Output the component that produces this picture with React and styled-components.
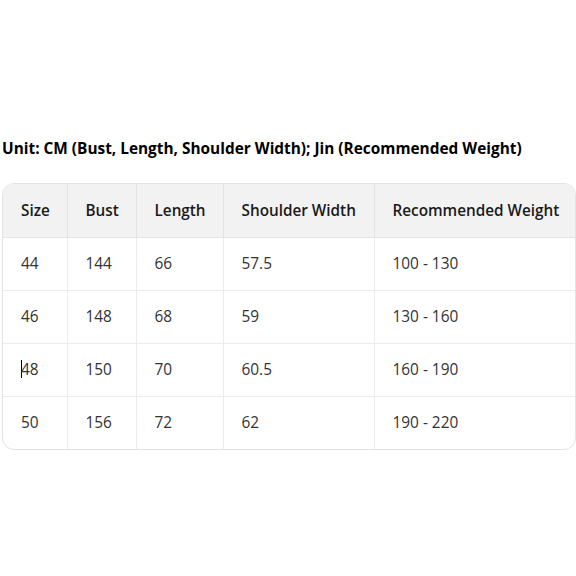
import React from "react";
import styled, { createGlobalStyle } from "styled-components";

const Global = createGlobalStyle`
  html, body { margin: 0; padding: 0; background: #ffffff; }
  body { font-family: "Open Sans", "Noto Sans", sans-serif; }
`;

const Page = styled.div`
  width: 576px;
  height: 576px;
  overflow: hidden;
  padding: 137px 0 0 2px;
  box-sizing: border-box;
`;

const Title = styled.h3`
  margin: 0 0 22px 0;
  font-size: 15.4px;
  line-height: 24px;
  font-weight: 700;
  color: #000;
  white-space: nowrap;
`;

const Wrap = styled.div`
  width: 574px;
  border: 1px solid #e3e3e3;
  border-radius: 12px;
  overflow: hidden;
  box-sizing: border-box;
`;

const Table = styled.table`
  width: 100%;
  border-collapse: collapse;
  table-layout: fixed;
  font-size: 15.4px;
`;

const Th = styled.th`
  background: #f2f2f2;
  color: #1a1a1a;
  font-weight: 600;
  font-size: 15.3px;
  text-align: left;
  height: 53px;
  padding: 0 0 0 18px;
  box-sizing: border-box;
  border-left: ${(p) => (p.$first ? "none" : "1px solid #e3e3e3")};
  border-bottom: 1px solid #e3e3e3;
  white-space: nowrap;
`;

const Td = styled.td`
  color: #333;
  text-align: left;
  height: 53px;
  padding: 0 0 1px 18px;
  box-sizing: border-box;
  border-left: ${(p) => (p.$first ? "none" : "1px solid #ececec")};
  border-top: ${(p) => (p.$top ? "none" : "1px solid #ececec")};
  white-space: nowrap;
`;

const Caret = styled.span`
  display: inline-block;
  width: 1px;
  height: 18px;
  background: #000;
  vertical-align: -3px;
  margin-right: -1px;
`;

const widths = [64, 69, 87, 151, 201];
const headers = ["Size", "Bust", "Length", "Shoulder Width", "Recommended Weight"];
const rows = [
  ["44", "144", "66", "57.5", "100 - 130"],
  ["46", "148", "68", "59", "130 - 160"],
  ["48", "150", "70", "60.5", "160 - 190"],
  ["50", "156", "72", "62", "190 - 220"],
];

export default function App() {
  return (
    <Page>
      <Global />
      <Title>Unit: CM (Bust, Length, Shoulder Width); Jin (Recommended Weight)</Title>
      <Wrap>
        <Table>
          <colgroup>
            {widths.map((w, i) => (
              <col key={i} style={{ width: w }} />
            ))}
          </colgroup>
          <thead>
            <tr>
              {headers.map((h, i) => (
                <Th key={h} $first={i === 0}>{h}</Th>
              ))}
            </tr>
          </thead>
          <tbody>
            {rows.map((r, ri) => (
              <tr key={ri}>
                {r.map((c, ci) => (
                  <Td key={ci} $first={ci === 0} $top={ri === 0}>
                    {ri === 2 && ci === 0 ? <Caret /> : null}
                    {c}
                  </Td>
                ))}
              </tr>
            ))}
          </tbody>
        </Table>
      </Wrap>
    </Page>
  );
}
